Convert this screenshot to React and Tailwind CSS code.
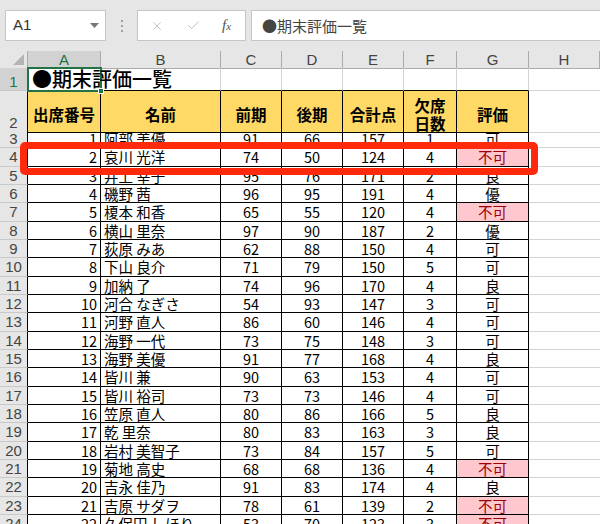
import { X, Check } from "lucide-react";

const GRID = "grid grid-cols-[28px_73px_120px_61px_61px_61px_53px_72px_71px]";
const FONT = { fontFamily: '"Noto Sans CJK JP", "Liberation Sans", sans-serif' };

const rows = [
  [1, "阿部 美優", 91, 66, 157, 1, "可"],
  [2, "哀川 光洋", 74, 50, 124, 4, "不可"],
  [3, "井上 幸子", 95, 76, 171, 2, "良"],
  [4, "磯野 茜", 96, 95, 191, 4, "優"],
  [5, "榎本 和香", 65, 55, 120, 4, "不可"],
  [6, "横山 里奈", 97, 90, 187, 2, "優"],
  [7, "荻原 みあ", 62, 88, 150, 4, "可"],
  [8, "下山 良介", 71, 79, 150, 5, "可"],
  [9, "加納 了", 74, 96, 170, 4, "良"],
  [10, "河合 なぎさ", 54, 93, 147, 3, "可"],
  [11, "河野 直人", 86, 60, 146, 4, "可"],
  [12, "海野 一代", 73, 75, 148, 3, "可"],
  [13, "海野 美優", 91, 77, 168, 4, "良"],
  [14, "皆川 兼", 90, 63, 153, 4, "可"],
  [15, "皆川 裕司", 73, 73, 146, 4, "可"],
  [16, "笠原 直人", 80, 86, 166, 5, "良"],
  [17, "乾 里奈", 80, 83, 163, 3, "良"],
  [18, "岩村 美智子", 73, 84, 157, 5, "可"],
  [19, "菊地 高史", 68, 68, 136, 4, "不可"],
  [20, "吉永 佳乃", 91, 83, 174, 4, "良"],
  [21, "吉原 サダヲ", 78, 61, 139, 2, "不可"],
  [22, "久保田 しほり", 53, 70, 123, 3, "不可"],
];

const letters = ["A", "B", "C", "D", "E", "F", "G", "H"];

function RowHead({ n, selected, className = "" }) {
  return (
    <div
      className={
        "flex justify-center border-b border-[#c9c9c9] text-[15px] leading-[17px] " +
        (selected
          ? "bg-[#d2d2d2] text-[#217346] border-r border-r-[#217346] items-end "
          : "bg-[#e6e6e6] text-[#444] border-r border-r-[#ababab] ") +
        className
      }
      style={{ fontFamily: '"Liberation Sans", sans-serif' }}
    >
      {n}
    </div>
  );
}

function Toolbar() {
  return (
    <div className="bg-[#e6e6e6] h-[51px] pt-[10px]">
      <div className="flex h-[31px] text-[15px]">
        <div className="w-[5px]" />
        <div
          className="w-[101px] bg-white border border-[#c6c6c6] flex items-center justify-between pl-[7px] pr-[6px] text-[#333]"
          style={{ fontFamily: '"Liberation Sans", sans-serif' }}
        >
          <span>A1</span>
          <svg width="9" height="5" viewBox="0 0 9 5">
            <polygon points="0,0 9,0 4.5,5" fill="#777" />
          </svg>
        </div>
        <div className="w-[31px] flex flex-col items-center justify-center gap-[3px]">
          <span className="w-[2px] h-[2px] bg-[#a0a0a0]" />
          <span className="w-[2px] h-[2px] bg-[#a0a0a0]" />
          <span className="w-[2px] h-[2px] bg-[#a0a0a0]" />
        </div>
        <div className="w-[109px] bg-white border border-[#c6c6c6] flex items-center">
          <X size={14} strokeWidth={1.3} color="#b5b5b5" className="ml-[12px]" />
          <Check size={15} strokeWidth={1.4} color="#b5b5b5" className="ml-[22px]" />
          <span
            className="ml-[21px] italic text-[#555] text-[15px] leading-none"
            style={{ fontFamily: '"Liberation Serif", serif' }}
          >
            f<span className="text-[11px]">x</span>
          </span>
        </div>
        <div className="w-[5px]" />
        <div
          className="flex-1 bg-white border border-r-0 border-[#c6c6c6] flex items-center pl-[10px] text-[#444] leading-none"
          style={FONT}
        >
          ●期末評価一覧
        </div>
      </div>
    </div>
  );
}

function ColumnHeads() {
  return (
    <div
      className={GRID + " h-[17px] text-[15px] leading-none text-[#444]"}
      style={{ fontFamily: '"Liberation Sans", sans-serif' }}
    >
      <div className="bg-[#e6e6e6] border-r border-b border-[#ababab] flex items-end justify-end p-[3px]">
        <svg width="11" height="11" viewBox="0 0 11 11">
          <polygon points="11,0 11,11 0,11" fill="#b4b4b4" />
        </svg>
      </div>
      {letters.map((l, i) => (
        <div
          key={l}
          className={
            "flex items-center justify-center border-r border-b " +
            (i === 0
              ? "bg-[#d2d2d2] text-[#217346] border-r-[#ababab] border-b-[#217346] border-b-2"
              : "bg-[#e6e6e6] border-[#ababab]")
          }
        >
          {l}
        </div>
      ))}
    </div>
  );
}

function TitleRow() {
  return (
    <div className={GRID + " h-[23px] relative"}>
      <RowHead n={1} selected />
      <div className="relative border-b border-black">
        <div
          className="absolute left-[4px] bottom-[0px] z-20 whitespace-nowrap text-[20px] leading-[22px] font-medium text-black"
          style={FONT}
        >
          ●期末評価一覧
        </div>
      </div>
      <div className="border-b border-black border-r border-r-[#d4d4d4]" />
      <div className="border-b border-black border-r border-r-[#d4d4d4]" />
      <div className="border-b border-black border-r border-r-[#d4d4d4]" />
      <div className="border-b border-black border-r border-r-[#d4d4d4]" />
      <div className="border-b border-black border-r border-r-[#d4d4d4]" />
      <div className="border-b border-black border-r border-r-[#d4d4d4]" />
      <div className="border-b border-[#d4d4d4]" />
      {/* active cell A1 */}
      <div className="absolute left-[27px] top-[-1px] w-[75px] h-[25px] border-2 border-[#217346] z-10">
        <span className="absolute right-[-4px] bottom-[-4px] w-[6px] h-[6px] bg-[#217346] border border-white" />
      </div>
    </div>
  );
}

function HeaderRow() {
  const heads = ["出席番号", "名前", "前期", "後期", "合計点", null, "評価"];
  return (
    <div className={GRID + " h-[39px]"}>
      <RowHead n={2} className="items-end pb-[1px] border-r-black" />
      {heads.map((h, i) => (
        <div
          key={i}
          className="bg-[#ffd966] border-r border-b border-black flex flex-col items-center justify-center pt-[5px] font-bold text-[15.5px] leading-[18px] text-black"
          style={FONT}
        >
          {h === null ? (
            <>
              <span>欠席</span>
              <span>日数</span>
            </>
          ) : (
            h
          )}
        </div>
      ))}
      <div className="border-b border-[#d4d4d4]" />
    </div>
  );
}

function DataRow({ r, idx }) {
  const [no, name, a, b, total, absent, grade] = r;
  const bad = grade === "不可";
  const cell =
    "border-r border-b border-black flex items-center text-[14.5px] leading-[17px] text-black";
  return (
    <div className={GRID + " h-[18.33px]"}>
      <RowHead n={idx + 3} className="items-center border-r-black" />
      <div className={cell + " justify-end pr-[3px]"}>{no}</div>
      <div className={cell + " justify-start pl-[3px] whitespace-nowrap"}>{name}</div>
      <div className={cell + " justify-center"}>{a}</div>
      <div className={cell + " justify-center"}>{b}</div>
      <div className={cell + " justify-center"}>{total}</div>
      <div className={cell + " justify-center"}>{absent}</div>
      <div className={cell + " justify-center " + (bad ? "bg-[#ffc7ce] !text-[#9c0006]" : "")}>
        {grade}
      </div>
      <div className="border-b border-[#d4d4d4]" />
    </div>
  );
}

export default function App() {
  return (
    <div className="w-[600px] h-[524px] overflow-hidden bg-white relative" style={FONT}>
      <Toolbar />
      <ColumnHeads />
      <TitleRow />
      <HeaderRow />
      {rows.map((r, i) => (
        <DataRow key={i} r={r} idx={i} />
      ))}
      {/* highlight around row 4 */}
      <div className="absolute left-[20px] top-[142px] w-[518px] h-[33px] border-[7px] border-[#ff2a0c] rounded-[5px] z-30 pointer-events-none" />
    </div>
  );
}
